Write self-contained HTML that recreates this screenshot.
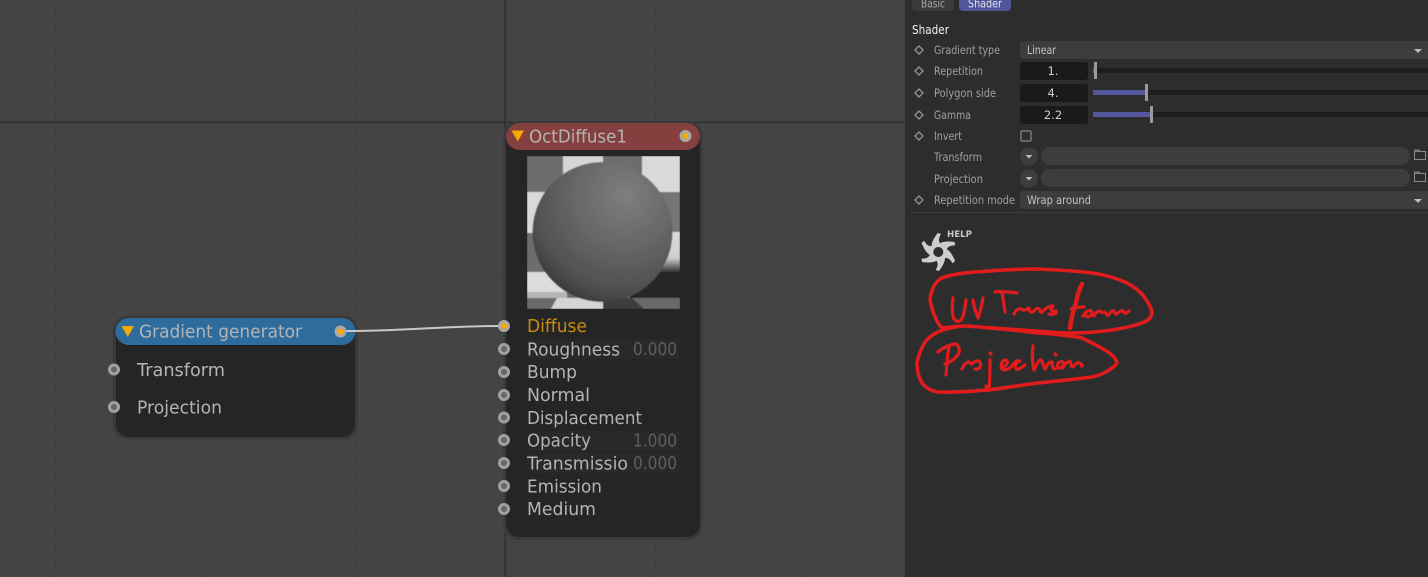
<!DOCTYPE html>
<html>
<head>
<meta charset="utf-8">
<style>
html,body{margin:0;padding:0;background:#444;width:1428px;height:577px;overflow:hidden}
svg{display:block}
text{font-family:"DejaVu Sans","Liberation Sans",sans-serif}
.n{font-size:17.5px;fill:#b4b4b4}
.p{font-size:11.5px;fill:#a0a0a0}
.v{font-size:17.5px;fill:#5e5e5e}
.d{fill:none;stroke:#8e8e8e;stroke-width:1.4}
.r{fill:none;stroke:#e01c1c;stroke-width:3.6;stroke-linecap:round;stroke-linejoin:round}
.h{fill:none;stroke:#e01c1c;stroke-width:3.2;stroke-linecap:round;stroke-linejoin:round}
</style>
</head>
<body>
<svg width="1428" height="577" viewBox="0 0 1428 577" xmlns="http://www.w3.org/2000/svg">
<defs>
<pattern id="g1" width="15" height="15" patternUnits="userSpaceOnUse" x="10" y="2">
<path d="M0.5 0V15M0 0.5H15" stroke="#424242" stroke-width="1" fill="none"/>
</pattern>
<pattern id="g2" width="150" height="150" patternUnits="userSpaceOnUse" x="55" y="122">
<path d="M0.5 0V150M0 0.5H150" stroke="#3f3f3f" stroke-width="1" fill="none"/>
</pattern>
<radialGradient id="sph" cx="0.66" cy="0.24" r="0.9">
<stop offset="0" stop-color="#7e7e7e"/>
<stop offset="0.4" stop-color="#676767"/>
<stop offset="0.75" stop-color="#505050"/>
<stop offset="1" stop-color="#2c2c2c"/>
</radialGradient>
<linearGradient id="glow" x1="0" y1="0" x2="0" y2="1">
<stop offset="0" stop-color="#dcdcdc"/>
<stop offset="0.65" stop-color="#cfcfcf"/>
<stop offset="1" stop-color="#333"/>
</linearGradient>
<clipPath id="imgc"><rect x="527" y="156" width="153" height="153"/></clipPath>
<filter id="bl"><feGaussianBlur stdDeviation="0.6"/></filter>
</defs>

<!-- canvas -->
<rect width="905" height="577" fill="#444"/>
<rect width="905" height="577" fill="url(#g1)"/>
<rect width="905" height="577" fill="url(#g2)"/>
<rect x="0" y="121.500" width="905" height="1.500" fill="#2f2f2f"/>
<rect x="504.500" y="0" width="1.500" height="577" fill="#2f2f2f"/>

<!-- panel -->
<rect x="905" y="0" width="523" height="577" fill="#2d2d2d"/>

<!-- gradient generator -->
<rect x="113" y="315.500" width="245" height="124" rx="15" fill="#393939"/>
<rect x="116" y="318" width="239" height="119" rx="13" fill="#252525"/>
<path d="M129 318H342A13.500 13.500 0 0 1 342 345H129A13.500 13.500 0 0 1 129 318Z" fill="#2f6c9e"/>
<path d="M121.500 326H134L127.750 337Z" fill="#f5a800"/>
<text class="n" x="139" y="337.500" textLength="163" lengthAdjust="spacingAndGlyphs">Gradient generator</text>
<text class="n" x="137" y="376" textLength="88" lengthAdjust="spacingAndGlyphs">Transform</text>
<text class="n" x="137" y="413.500" textLength="85" lengthAdjust="spacingAndGlyphs">Projection</text>

<!-- octdiffuse -->
<rect x="503.500" y="121" width="199" height="419" rx="15" fill="#393939"/>
<rect x="506" y="123" width="194" height="414" rx="13" fill="#252525"/>
<path d="M519.500 123H686.500A13.500 13.500 0 0 1 686.500 150H519.500A13.500 13.500 0 0 1 519.500 123Z" fill="#843f3f"/>
<path d="M511.500 130.500H524L517.750 141.500Z" fill="#f5a800"/>
<text class="n" x="529" y="142.500" textLength="98" lengthAdjust="spacingAndGlyphs">OctDiffuse1</text>
<circle cx="685.500" cy="136" r="4.500" fill="#f5a800" stroke="#a8a8a8" stroke-width="3"/>

<!-- wire -->
<path d="M345 331C410 331 440 326 500 326" fill="none" stroke="#c8c8c8" stroke-width="2"/>
<circle cx="340.500" cy="331.500" r="4.500" fill="#f5a800" stroke="#a8a8a8" stroke-width="3"/>
<circle cx="114" cy="369.500" r="4.500" fill="#666" stroke="#a0a0a0" stroke-width="3"/>
<circle cx="114" cy="407" r="4.500" fill="#666" stroke="#a0a0a0" stroke-width="3"/>

<!-- preview -->
<g clip-path="url(#imgc)">
<g filter="url(#bl)">
<rect x="527" y="156" width="153" height="153" fill="#6d6d6d"/>
<rect x="563" y="156" width="40" height="36" fill="#d6d6d6"/>
<rect x="642" y="156" width="38" height="36" fill="#d9d9d9"/>
<rect x="527" y="192" width="18" height="41" fill="#d9d9d9"/>
<rect x="642" y="192" width="38" height="40" fill="#747474"/>
<rect x="660" y="232" width="20" height="40" fill="url(#glow)"/>
<rect x="527" y="272" width="40" height="26" fill="#dcdcdc"/>
<rect x="527" y="292" width="40" height="6" fill="#b4b4b4"/>
<rect x="630" y="272" width="50" height="26" fill="#262626"/>
<rect x="527" y="298" width="153" height="11" fill="#6a6a6a"/>
<path d="M557 298H603V309H551Z" fill="#d4d4d4"/>
<path d="M603 298H632L644 309H603Z" fill="#3c3c3c"/>
<circle cx="602.500" cy="232" r="70" fill="url(#sph)"/>
</g>
</g>

<rect x="527" y="339" width="152" height="20" fill="#292929"/>
<rect x="527" y="431" width="152" height="20" fill="#292929"/>
<rect x="527" y="453" width="152" height="20" fill="#292929"/>

<text class="n" x="527" y="332" textLength="60" lengthAdjust="spacingAndGlyphs" style="fill:#c98a10">Diffuse</text>
<text class="n" x="527" y="355.500" textLength="93" lengthAdjust="spacingAndGlyphs">Roughness</text>
<text class="n" x="527" y="378" textLength="50" lengthAdjust="spacingAndGlyphs">Bump</text>
<text class="n" x="527" y="401" textLength="63" lengthAdjust="spacingAndGlyphs">Normal</text>
<text class="n" x="527" y="424" textLength="115" lengthAdjust="spacingAndGlyphs">Displacement</text>
<text class="n" x="527" y="446.500" textLength="64" lengthAdjust="spacingAndGlyphs">Opacity</text>
<text class="n" x="527" y="469.500" textLength="101" lengthAdjust="spacingAndGlyphs">Transmissio</text>
<text class="n" x="527" y="492.500" textLength="75" lengthAdjust="spacingAndGlyphs">Emission</text>
<text class="n" x="527" y="515" textLength="69" lengthAdjust="spacingAndGlyphs">Medium</text>
<text class="v" x="633" y="355" textLength="44" lengthAdjust="spacingAndGlyphs">0.000</text>
<text class="v" x="633" y="446.500" textLength="44" lengthAdjust="spacingAndGlyphs">1.000</text>
<text class="v" x="633" y="469" textLength="44" lengthAdjust="spacingAndGlyphs">0.000</text>

<circle cx="504" cy="326" r="4.500" fill="#f5a800" stroke="#a8a8a8" stroke-width="3"/>
<g fill="#666" stroke="#a0a0a0" stroke-width="3">
<circle cx="504" cy="349" r="4.500"/>
<circle cx="504" cy="372" r="4.500"/>
<circle cx="504" cy="395" r="4.500"/>
<circle cx="504" cy="417.500" r="4.500"/>
<circle cx="504" cy="440" r="4.500"/>
<circle cx="504" cy="463" r="4.500"/>
<circle cx="504" cy="486" r="4.500"/>
<circle cx="504" cy="509" r="4.500"/>
</g>

<!-- panel tabs -->
<path d="M912 0H954V7A4 4 0 0 1 950 11H916A4 4 0 0 1 912 7Z" fill="#3a3a3a"/>
<path d="M959 0H1011V7A4 4 0 0 1 1007 11H963A4 4 0 0 1 959 7Z" fill="#50559c"/>
<text x="921" y="7.500" font-size="11.500" fill="#a8a8a8" textLength="24" lengthAdjust="spacingAndGlyphs">Basic</text>
<text x="968" y="7.500" font-size="11.500" fill="#e4e4e4" textLength="34" lengthAdjust="spacingAndGlyphs">Shader</text>
<text x="912" y="34" font-size="12.500" fill="#f0f0f0" textLength="37" lengthAdjust="spacingAndGlyphs">Shader</text>

<!-- diamonds -->
<g class="d">
<path d="M919 46L923 50L919 54L915 50Z"/>
<path d="M919 67L923 71L919 75L915 71Z"/>
<path d="M919 89L923 93L919 97L915 93Z"/>
<path d="M919 111L923 115L919 119L915 115Z"/>
<path d="M919 132L923 136L919 140L915 136Z"/>
<path d="M919 196L923 200L919 204L915 200Z"/>
</g>

<!-- labels -->
<text class="p" x="934" y="54" textLength="66" lengthAdjust="spacingAndGlyphs">Gradient type</text>
<text class="p" x="934" y="75" textLength="49" lengthAdjust="spacingAndGlyphs">Repetition</text>
<text class="p" x="934" y="97" textLength="62" lengthAdjust="spacingAndGlyphs">Polygon side</text>
<text class="p" x="934" y="119" textLength="37" lengthAdjust="spacingAndGlyphs">Gamma</text>
<text class="p" x="934" y="140" textLength="28" lengthAdjust="spacingAndGlyphs">Invert</text>
<text class="p" x="934" y="161" textLength="48" lengthAdjust="spacingAndGlyphs">Transform</text>
<text class="p" x="934" y="183" textLength="49" lengthAdjust="spacingAndGlyphs">Projection</text>
<text class="p" x="934" y="204" textLength="81" lengthAdjust="spacingAndGlyphs">Repetition mode</text>

<!-- dropdowns -->
<rect x="1020" y="41" width="412" height="18" rx="4" fill="#3d3d3d"/>
<text x="1027" y="54" font-size="11.500" fill="#c4c4c4" textLength="29" lengthAdjust="spacingAndGlyphs">Linear</text>
<path d="M1414 49H1422L1418 53Z" fill="#bdbdbd"/>
<rect x="1020" y="191" width="412" height="18" rx="4" fill="#3d3d3d"/>
<text x="1027" y="204" font-size="11.500" fill="#c4c4c4" textLength="64" lengthAdjust="spacingAndGlyphs">Wrap around</text>
<path d="M1414 199H1422L1418 203Z" fill="#bdbdbd"/>

<!-- number fields -->
<rect x="1020" y="62" width="68" height="18" rx="3" fill="#1a1a1a"/>
<rect x="1020" y="84" width="68" height="18" rx="3" fill="#1a1a1a"/>
<rect x="1020" y="106" width="68" height="18" rx="3" fill="#1a1a1a"/>
<text x="1053" y="75" font-size="11.500" fill="#c8d0d8" text-anchor="middle">1.</text>
<text x="1053" y="97" font-size="11.500" fill="#c8d0d8" text-anchor="middle">4.</text>
<text x="1053" y="119" font-size="11.500" fill="#c8d0d8" text-anchor="middle">2.2</text>

<!-- sliders -->
<rect x="1093" y="68" width="335" height="5" fill="#1d1d1d"/>
<rect x="1093" y="90" width="335" height="5" fill="#1d1d1d"/>
<rect x="1093" y="112" width="335" height="5" fill="#1d1d1d"/>
<rect x="1093" y="68" width="3" height="5" fill="#55589f"/>
<rect x="1093" y="90" width="53" height="5" fill="#55589f"/>
<rect x="1093" y="112" width="58" height="5" fill="#55589f"/>
<rect x="1094" y="62" width="3" height="17" fill="#9a9a9a"/>
<rect x="1145" y="84" width="3" height="17" fill="#9a9a9a"/>
<rect x="1150" y="106" width="3" height="17" fill="#9a9a9a"/>

<!-- checkbox -->
<rect x="1021" y="131" width="10" height="10" rx="1.500" fill="none" stroke="#7a7a7a" stroke-width="1.500"/>

<!-- link fields -->
<circle cx="1029" cy="156.500" r="9" fill="#3d3d3d"/>
<path d="M1025.500 155H1032.500L1029 158.500Z" fill="#bdbdbd"/>
<rect x="1041" y="147" width="369" height="18" rx="9" fill="#3d3d3d"/>
<circle cx="1029" cy="178.500" r="9" fill="#3d3d3d"/>
<path d="M1025.500 177H1032.500L1029 180.500Z" fill="#bdbdbd"/>
<rect x="1041" y="169" width="369" height="18" rx="9" fill="#3d3d3d"/>
<g fill="none" stroke="#8a8a8a" stroke-width="1">
<rect x="1414.500" y="151.500" width="11" height="8"/>
<rect x="1414.500" y="173.500" width="11" height="8"/>
</g>
<rect x="1414" y="149.500" width="6" height="2" fill="#7a7a7a"/>
<rect x="1414" y="171.500" width="6" height="2" fill="#7a7a7a"/>

<rect x="910" y="212" width="518" height="1" fill="#3a3a3a"/>

<!-- help logo -->
<text x="947" y="237" font-size="9" font-weight="bold" fill="#c8c8c8" textLength="25" lengthAdjust="spacingAndGlyphs">HELP</text>
<g transform="translate(938.300 252)" fill="#cdcdcd">
<path d="M-6.700 -6C-6.700 -11 -3 -15.500 -0.700 -19L2.700 -18C1.200 -15.500 0.500 -13.500 0.700 -11.500C1 -9.500 2 -8 3.500 -6.500Z"/>
<path transform="rotate(60)" d="M-6.700 -6C-6.700 -11 -3 -15.500 -0.700 -19L2.700 -18C1.200 -15.500 0.500 -13.500 0.700 -11.500C1 -9.500 2 -8 3.500 -6.500Z"/>
<path transform="rotate(120)" d="M-6.700 -6C-6.700 -11 -3 -15.500 -0.700 -19L2.700 -18C1.200 -15.500 0.500 -13.500 0.700 -11.500C1 -9.500 2 -8 3.500 -6.500Z"/>
<path transform="rotate(180)" d="M-6.700 -6C-6.700 -11 -3 -15.500 -0.700 -19L2.700 -18C1.200 -15.500 0.500 -13.500 0.700 -11.500C1 -9.500 2 -8 3.500 -6.500Z"/>
<path transform="rotate(240)" d="M-6.700 -6C-6.700 -11 -3 -15.500 -0.700 -19L2.700 -18C1.200 -15.500 0.500 -13.500 0.700 -11.500C1 -9.500 2 -8 3.500 -6.500Z"/>
<path transform="rotate(300)" d="M-6.700 -6C-6.700 -11 -3 -15.500 -0.700 -19L2.700 -18C1.200 -15.500 0.500 -13.500 0.700 -11.500C1 -9.500 2 -8 3.500 -6.500Z"/>
<circle r="9"/>
<circle r="5" fill="#2d2d2d"/>
</g>

<!-- red annotation -->
<path class="r" d="M942 328C936 322 932 310 930 300C931 289 935 283 940 279C950 274 965 273 975 272C1000 270 1020 269 1038 269C1060 270 1078 271 1092 273C1108 275 1118 279 1125 282C1135 287 1141 292 1145 298C1149 304 1152 309 1152 313C1151 319 1147 321 1142 323C1134 326 1124 328 1112 330C1098 332 1085 333 1072 333C1055 333 1038 331 1022 330C1002 329 983 327 965 326C957 326 950 327 942 328Z"/>
<path class="r" d="M962 326C953 327 945 329 938 332C932 335 928 338 925 342C921 349 918 356 917 363C917 371 919 378 922 383C927 389 932 391 938 392C955 393 972 391 988 390C1005 388 1022 385 1038 383C1058 381 1076 379 1092 377C1101 375 1107 372 1112 368C1115 366 1117 364 1117 362C1115 357 1110 353 1105 350C1098 346 1090 342 1082 338C1068 335 1053 334 1038 333C1022 331 1005 329 988 328"/>
<path class="h" d="M953 298C952 306 952 315 954 319C956 322 959 322 961 320C964 316 965 308 966 300"/>
<path class="h" d="M973 300C974 306 976 313 978 318C980 312 982 305 983 298"/>
<path class="h" d="M995 292C1002 291 1010 292 1017 293M1002 292C1003 298 1004 305 1005 312"/>
<path class="h" d="M1014 314C1016 310 1018 308 1021 309C1024 311 1026 310 1029 308C1029 312 1031 313 1034 311C1036 308 1038 307 1040 310C1040 313 1042 313 1044 310C1047 307 1050 306 1053 306C1050 309 1050 312 1056 311C1058 313 1053 315 1049 314"/>
<path class="h" style="stroke-width:4.500" d="M1082 284C1079 290 1077 297 1076 303C1073 311 1071 320 1070 328"/>
<path class="h" d="M1071 309C1076 307 1080 307 1084 307M1083 316C1086 311 1090 309 1092 312C1092 317 1087 318 1085 315M1094 316C1096 312 1098 311 1100 311C1102 313 1103 313 1105 312C1106 314 1107 316 1109 315C1110 312 1112 310 1114 311C1115 314 1116 315 1118 313C1120 311 1122 310 1124 312C1125 314 1127 313 1129 311"/>
<path class="h" d="M946 375C947 365 947 355 949 347M938 352C944 347 951 344 956 344C960 347 961 352 956 357C952 361 948 363 945 364"/>
<path class="h" d="M962 369C964 364 966 363 968 362C970 362 971 364 972 364C974 361 978 360 980 362C982 366 979 370 975 369"/>
<path class="h" d="M990 353L991 354M990 360C990 370 990 380 989 388C988 392 987 391 986 386"/>
<path class="h" d="M1003 367C1006 366 1009 362 1006 360C1002 360 1000 365 1002 369C1005 371 1009 369 1012 366C1014 362 1018 360 1020 361C1016 362 1014 366 1016 369C1019 370 1022 367 1025 365"/>
<path class="h" d="M1033 346C1032 354 1032 362 1034 370C1036 366 1038 361 1040 360C1043 360 1043 366 1045 369C1047 366 1048 363 1050 362M1055 354L1056 355M1052 362C1052 366 1053 369 1055 369"/>
<path class="h" d="M1058 368C1056 364 1060 360 1063 362C1066 365 1063 369 1060 368C1063 366 1067 362 1070 361C1071 364 1071 367 1073 367C1075 364 1078 361 1081 364C1084 366 1080 367 1082 365"/>
</svg>
</body>
</html>
